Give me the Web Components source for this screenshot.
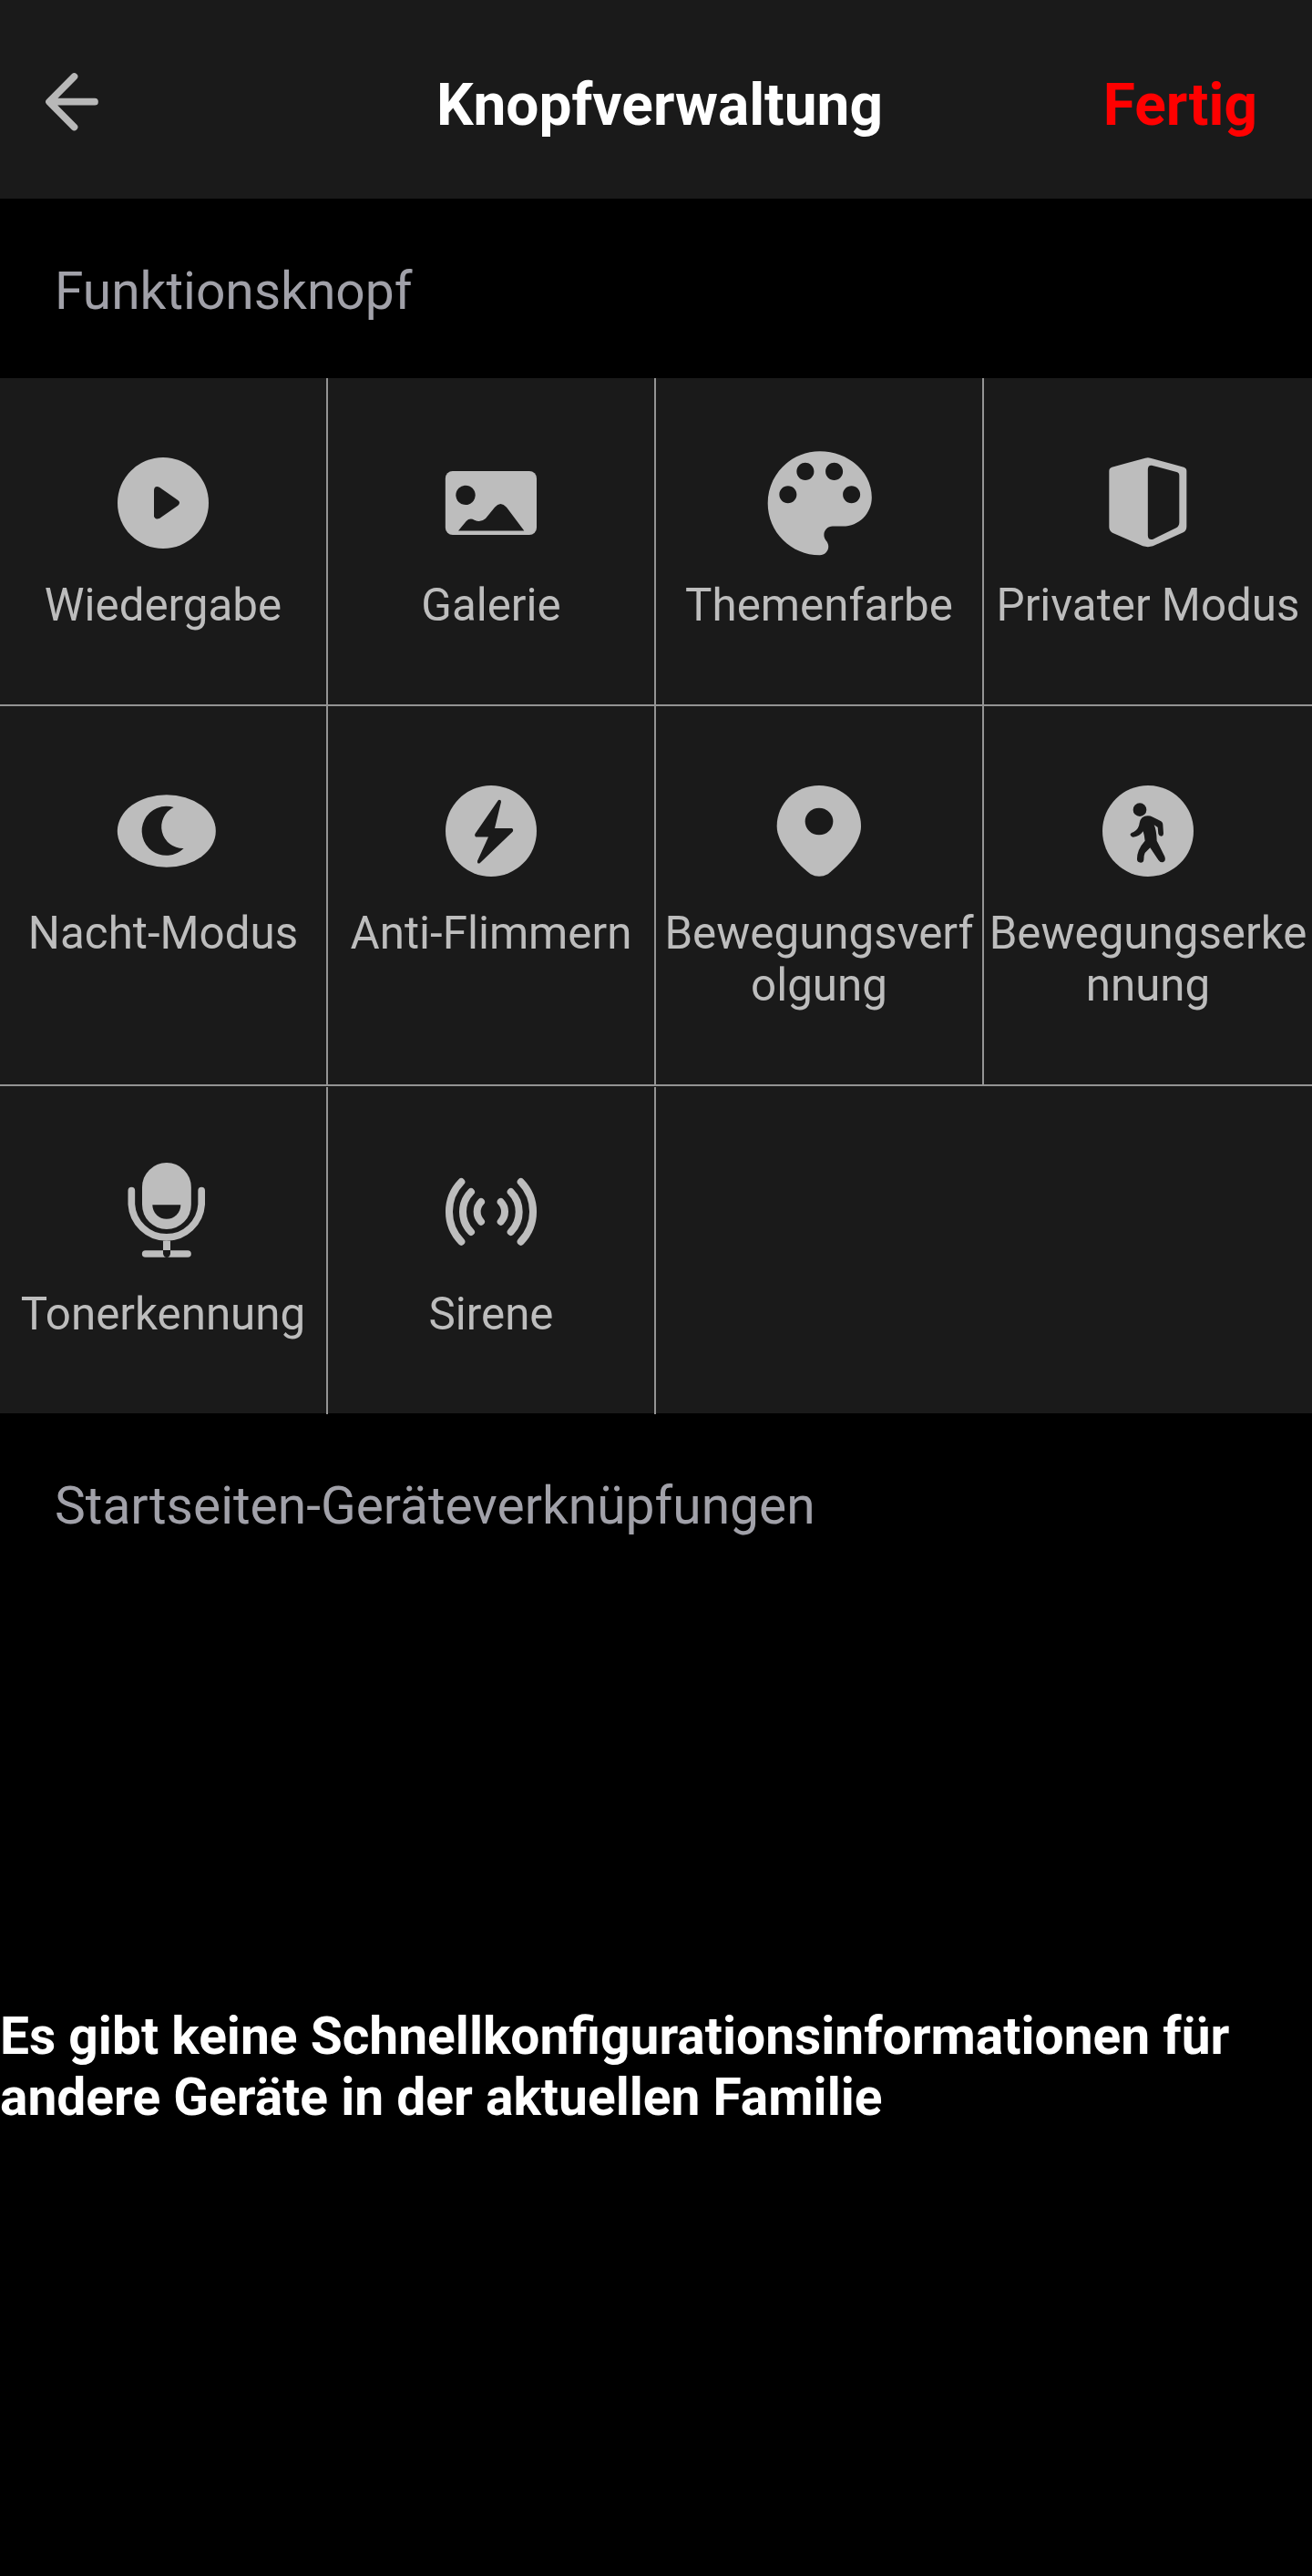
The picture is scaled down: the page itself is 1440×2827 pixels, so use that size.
<!DOCTYPE html>
<html lang="de">
<head>
<meta charset="utf-8">
<title>Knopfverwaltung</title>
<style>
html, body { margin: 0; background: #000; }
body { font-family: Roboto, sans-serif; color: #fff; }
</style>
</head>
<body>
<button-manager>
  <app-header slot="header">Knopfverwaltung<span slot="action">Fertig</span></app-header>
  <section-title>Funktionsknopf</section-title>
  <function-grid>
    <function-tile icon="play">Wiedergabe</function-tile>
    <function-tile icon="gallery">Galerie</function-tile>
    <function-tile icon="palette">Themenfarbe</function-tile>
    <function-tile icon="privacy" class="last">Privater Modus</function-tile>
    <function-tile icon="moon" class="mid">Nacht-Modus</function-tile>
    <function-tile icon="bolt" class="mid">Anti-Flimmern</function-tile>
    <function-tile icon="pin" class="mid">Bewegungsverfolgung</function-tile>
    <function-tile icon="walk" class="mid last">Bewegungserkennung</function-tile>
    <function-tile icon="mic" class="bottom">Tonerkennung</function-tile>
    <function-tile icon="siren" class="bottom">Sirene</function-tile>
  </function-grid>
  <section-title>Startseiten-Geräteverknüpfungen</section-title>
  <empty-note>Es gibt keine Schnellkonfigurationsinformationen für andere Geräte in der aktuellen Familie</empty-note>
</button-manager>
<script>
const FG = '#bdbdbd', BG = '#1a1a1a';
const ICONS = {
  play: ['-3 6', `<circle cx="177" cy="186" r="150"/><path fill="${BG}" d="M147 144Q148 128 165 134L226 177Q236 185 226 194L165 237Q149 242 147 229Z"/>`],
  gallery: ['1077 6', `<rect x="1106.500" y="81" width="300.500" height="210" rx="24"/><circle fill="${BG}" cx="1173" cy="160" r="32"/><path fill="${BG}" d="M1149 277.500L1175 246Q1187 234 1202 242Q1222 252 1239 237L1269 200Q1288 178 1308 200L1366 277.500Z"/>`],
  palette: ['-3 6', `<path transform="translate(-49 -41.500) scale(19.020)" d="M12 3c-4.970 0-9 4.030-9 9s4.030 9 9 9c.83 0 1.500-.67 1.500-1.500 0-.39-.15-.74-.39-1.010-.23-.26-.38-.61-.38-.99 0-.83.67-1.500 1.500-1.500H16c2.760 0 5-2.240 5-5 0-4.420-4.030-8-9-8zm-5.500 9c-.83 0-1.500-.67-1.500-1.500S5.670 9 6.500 9 8 9.670 8 10.500 7.330 12 6.500 12zm3-4C8.670 8 8 7.330 8 6.500S8.670 5 9.500 5s1.500.67 1.500 1.500S10.330 8 9.500 8zm5 0c-.83 0-1.500-.67-1.500-1.500S13.670 5 14.500 5s1.500.67 1.500 1.500S15.330 8 14.500 8zm3 4c-.83 0-1.500-.67-1.500-1.500S16.670 9 17.500 9s1.500.67 1.500 1.500-.67 1.500-1.500 1.500z"/>`],
  privacy: ['1080 6', `<path d="M1251 38Q1260 35 1268 38L1378 68Q1387 71 1387 80V264Q1387 277 1376 283L1276 328Q1260 333 1243 328L1143 284Q1132 278 1132 265V80Q1132 71 1141 68Z"/><path fill="${BG}" d="M1259.500 75Q1260 61 1272 62L1354 84Q1363 86 1363 96V250Q1363 262 1353 268L1277 305Q1260 309 1259.500 293Z"/>`],
  moon: ['-3 1086', `<ellipse cx="188.500" cy="1266" rx="162" ry="119.500"/><path fill="${BG}" d="M212 1188A81 81 0 1 0 245 1323A71 71 0 0 1 212 1188Z"/>`],
  bolt: ['1077 1086', `<circle cx="1257" cy="1266" r="150"/><path fill="${BG}" d="M1284 1163Q1290 1163 1290 1170L1269 1257H1325Q1332 1260 1328 1268L1220 1372Q1211 1375 1212 1364L1248 1285.500H1207Q1201 1281 1205 1274L1279 1167Q1281 1163 1284 1163Z"/>`],
  pin: ['-3 1086', `<path d="M177 1116C255 1116 315 1176 315 1250C315 1305 260 1362 206 1408Q177 1423 149 1408C93 1362 38 1305 38 1250C38 1176 98 1116 177 1116Z"/><ellipse fill="${BG}" cx="177" cy="1234.500" rx="46" ry="44.500"/>`],
  walk: ['1080 1086', `<circle cx="1260" cy="1266" r="150"/><circle fill="${BG}" cx="1233" cy="1196" r="22"/><path fill="${BG}" d="M1232 1240Q1236 1216 1259 1216Q1268 1216 1276 1220L1300 1232Q1309 1236 1309 1245L1311 1274Q1311 1282 1304 1283Q1296 1283 1294 1275L1292 1254L1280 1246Q1288 1262 1289 1298L1315 1350Q1320 1366 1309 1369Q1300 1370 1294 1361L1267 1321L1250 1338Q1246 1345 1246 1361Q1245 1370 1236 1370Q1225 1370 1224 1360Q1223 1328 1250 1298Q1248 1280 1244 1267Q1232 1284 1211 1286Q1201 1284 1202 1276Q1204 1271 1213 1269Q1230 1260 1232 1240Z"/>`],
  mic: ['-3 30', `<rect x="108" y="48" width="161.500" height="219" rx="80.700"/><path fill="${BG}" d="M142 187H235A46.500 46.500 0 0 1 142 187Z"/><path fill="none" stroke="${FG}" stroke-width="23" stroke-linecap="round" d="M73 140V185A115.500 116.500 0 0 0 303.500 185V140M119 348H258"/><path d="M177 305H201V336H177Z"/><path fill="${BG}" d="M177 336H201V348Q198 360 189 360Q180 360 177 348Z"/>`],
  siren: ['1077 30', `<path fill="none" stroke="${FG}" stroke-width="24" stroke-linecap="round" d="M1159 111A141 141 0 0 0 1159 308M1191 144A94 94 0 0 0 1191 276M1224 177A47 47 0 0 0 1224 242M1355 111A141 141 0 0 1 1355 308M1322 144A94 94 0 0 1 1322 276M1289 177A47 47 0 0 1 1289 242"/>`],
};
const define = (name, html, setup) => customElements.define(name, class extends HTMLElement {
  constructor() {
    super();
    this.attachShadow({ mode: 'open' }).innerHTML = html;
  }
  connectedCallback() { if (setup) setup(this); }
});

define('app-header', `<style>
  :host { display: grid; grid-template-columns: 1fr auto 1fr; height: 218px; background: ${BG}; font-weight: 700; font-size: 64px; line-height: 75px; color: #fff; }
  svg { display: block; margin: 72px 0 0 40px; }
  .title { padding: 78px 0 0 8px; }
  .action { padding: 78px 60px 0 0; text-align: right; color: #f00; }
</style>
<svg width="80" height="80" viewBox="40 72 80 80" fill="none" stroke="#b8b8b8" stroke-width="7.700" stroke-linecap="round" stroke-linejoin="round"><path d="M81.500 84L54 111.700L81.500 139.500M55 111.700H104"/></svg>
<div class="title"><slot></slot></div>
<div class="action"><slot name="action"></slot></div>`);

define('section-title', `<style>
  :host { display: block; height: 197px; box-sizing: border-box; padding: 69px 60px 0; font-size: 56.9px; line-height: 66px; color: #a1a1a9; }
</style><slot></slot>`);

define('function-grid', `<style>
  :host { display: grid; grid-template-columns: repeat(4, 360px); grid-template-rows: 360px 418px 358px; height: 1136px; background: ${BG}; }
  ::slotted(.mid) { height: 417px; }
  ::slotted(.bottom) { height: 359px; border-bottom: 0 !important; }
  ::slotted(.last) { border-right: 0 !important; }
</style><slot></slot>`);

define('function-tile', `<style>
  :host { display: flex; flex-direction: column; align-items: center; box-sizing: border-box; height: 360px; padding-top: 77px; gap: 24px; border-right: 2px solid #949494; border-bottom: 2px solid #949494; color: ${FG}; font-size: 49.3px; line-height: 57px; }
  svg { display: block; flex: none; }
  .label { width: 100%; text-align: center; word-break: break-all; }
</style><svg width="120" height="120" fill="${FG}"></svg><div class="label"><slot></slot></div>`, el => {
  const [origin, art] = ICONS[el.getAttribute('icon')];
  const svg = el.shadowRoot.querySelector('svg');
  svg.setAttribute('viewBox', origin + ' 360 360');
  svg.innerHTML = art;
});

define('empty-note', `<style>
  :host { display: flex; flex: 1; align-items: flex-start; padding-top: 453px; font-size: 56.9px; line-height: 67px; font-weight: 700; color: #fff; }
</style><div><slot></slot></div>`);

define('button-manager', `<style>
  :host { display: flex; flex-direction: column; width: 1440px; height: 2827px; overflow: hidden; background: #000; }
</style><slot name="header"></slot><slot></slot>`);
</script>
</body>
</html>
